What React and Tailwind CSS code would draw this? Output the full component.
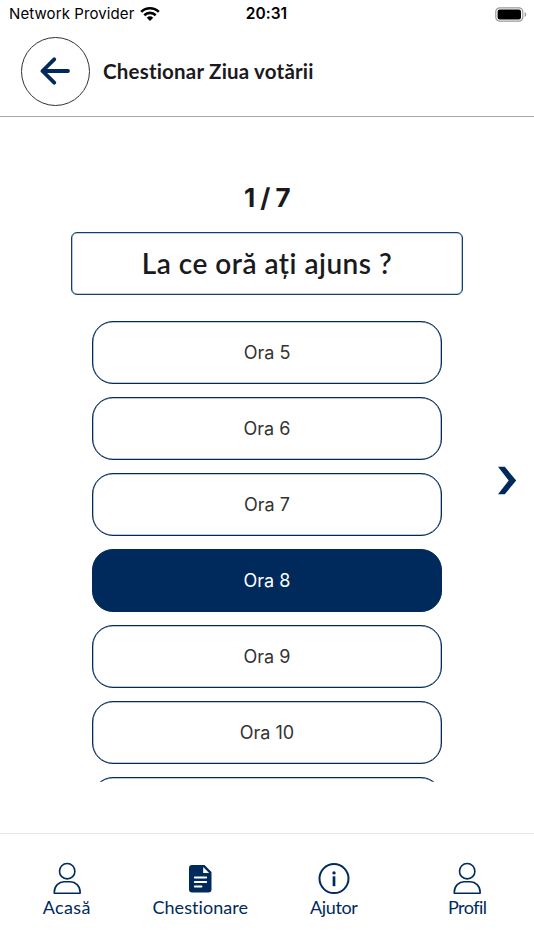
const options = ["Ora 5", "Ora 6", "Ora 7", "Ora 8", "Ora 9", "Ora 10", ""];
const selected = "Ora 8";

function WifiIcon() {
  return (
    <svg className="ml-[6px] h-[14px] w-[20px]" viewBox="0 0 20 14" fill="none" stroke="#000" strokeWidth="2.6">
      <path d="M1.200 4.900a12.600 12.600 0 0 1 17.600 0" />
      <path d="M4.300 8.200a8.200 8.200 0 0 1 11.400 0" />
      <path d="M6.800 10.700a4.700 4.700 0 0 1 6.400 0L10 13.900Z" fill="#000" stroke="none" />
    </svg>
  );
}

function BatteryIcon() {
  return (
    <svg className="h-[15px] w-[32px]" viewBox="0 0 32 15" fill="none">
      <rect x="0.8" y="0.8" width="27" height="13.4" rx="4" stroke="#999" strokeWidth="1.2" />
      <rect x="2.6" y="2.6" width="23.4" height="9.8" rx="2.2" fill="#000" />
      <path d="M29.600 5v5c2-.8 2-4.200 0-5Z" fill="#999" />
    </svg>
  );
}

function PersonIcon() {
  return (
    <svg className="h-[34px] w-[30px]" viewBox="0 0 30 34" fill="none" stroke="#002a5c" strokeWidth="1.6">
      <circle cx="15.200" cy="10.200" r="7.700" />
      <path d="M2.300 32.200v-1.200C2.300 25 7 20.800 12 20.800h6.400c5 0 9.700 4.200 9.700 10.200v1.200Z" strokeLinejoin="round" />
    </svg>
  );
}

function DocumentIcon() {
  return (
    <svg className="h-[34px] w-[30px]" viewBox="0 0 30 34">
      <path d="M7 4h12.500l7 7v17.500a3 3 0 0 1-3 3H7a3 3 0 0 1-3-3V7a3 3 0 0 1 3-3Z" fill="#002a5c" />
      <path d="M18.200 6v5.900h5.900Z" fill="#fff" />
      <path d="M9.800 16.500h11.400M9.800 21h11.400M9.800 25.500h6.700" stroke="#fff" strokeWidth="1.900" strokeLinecap="round" />
    </svg>
  );
}

function InfoIcon() {
  return (
    <svg className="h-[34px] w-[32px]" viewBox="0 0 32 34" fill="none">
      <circle cx="16" cy="17.600" r="14.500" stroke="#002a5c" strokeWidth="2" />
      <circle cx="16" cy="11.900" r="1.700" fill="#002a5c" />
      <path d="M16 15.300v9.900" stroke="#002a5c" strokeWidth="2.700" />
    </svg>
  );
}

const tabs = [
  { label: "Acasă", Icon: PersonIcon, spacing: "tracking-[0.4px]" },
  { label: "Chestionare", Icon: DocumentIcon, spacing: "tracking-[0.05px]" },
  { label: "Ajutor", Icon: InfoIcon, spacing: "tracking-[-0.4px]" },
  { label: "Profil", Icon: PersonIcon, spacing: "tracking-[-0.5px]" },
];

export default function App() {
  return (
    <div className="flex h-[950px] w-[534px] flex-col overflow-hidden bg-white font-['Inter',sans-serif] text-[#1a1a1e] [font-variant-ligatures:none]">
      <div className="grid h-[28px] shrink-0 grid-cols-3 items-center pl-[9px] pr-[7px] text-black">
        <div className="flex items-center whitespace-nowrap text-[15px] tracking-[0.1px]">
          <span>Network Provider</span>
          <WifiIcon />
        </div>
        <div className="pr-[3px] text-center text-[15.5px] font-semibold">20:31</div>
        <div className="flex justify-end"><BatteryIcon /></div>
      </div>

      <header className="flex h-[89px] shrink-0 items-center border-b border-[#a6a6a6] pb-[2px] pl-[21px]">
        <button className="flex size-[69px] items-center justify-center rounded-full border border-[#333]">
          <svg className="mr-[1px] h-[28px] w-[30px]" viewBox="0 0 30 28" fill="none" stroke="#002a5c" strokeWidth="3.8" strokeLinecap="round" strokeLinejoin="round">
            <path d="M28 14H2.500M14.200 2.300 2.500 14l11.700 11.700" />
          </svg>
        </button>
        <h1 className="ml-[13px] whitespace-nowrap font-['Lato',sans-serif] text-[20.5px] font-bold tracking-[0.2px]">Chestionar Ziua votării</h1>
      </header>

      <main className="flex h-[716px] shrink-0 flex-col items-center pt-[61px]">
        <div className="flex h-[40px] items-center text-[26px] font-bold leading-none tracking-[-0.5px]">1 / 7</div>
        <div className="mt-[14px] flex h-[63px] w-[392px] shrink-0 items-center justify-center rounded-[6px] border border-[#123f73] pb-[2px] font-['Lato',sans-serif] text-[28px] font-semibold tracking-[0.5px] shadow-[inset_0_0_0_0.3px_#123f73]">
          La ce oră ați ajuns ?
        </div>
        <div className="mt-[25.6px] grid h-[461.4px] w-full shrink-0 grid-cols-[92px_350px_1fr]">
          <div />
          <div className="flex flex-col gap-[13.1px] overflow-hidden">
            {options.map((option, index) => (
              <button
                key={index}
                className={
                  "h-[63px] w-full shrink-0 rounded-[21px] border border-[#002a5c] text-[18px] shadow-[inset_0_0_0_0.3px_#002a5c] " +
                  (option === selected ? "bg-[#002a5c] text-white" : "bg-white text-[#333]")
                }
              >
                {option}
              </button>
            ))}
          </div>
          <button className="flex items-start pl-[56px] pt-[145.4px]">
            <svg className="h-[29px] w-[19px]" viewBox="0 0 19 29">
              <path d="M0 .8h6.800L18.200 14.500 6.800 28.200H0L10.700 14.500Z" fill="#002a5c" />
            </svg>
          </button>
        </div>
      </main>

      <nav className="grid h-[117px] shrink-0 grid-cols-4 border-t border-[#e6e6e6] pt-[27px]">
        {tabs.map(({ label, Icon, spacing }) => (
          <div key={label} className="flex flex-col items-center">
            <Icon />
            <span className={"font-['Lato',sans-serif] text-[18px] leading-[24px] text-[#002a5c] " + spacing}>{label}</span>
          </div>
        ))}
      </nav>
    </div>
  );
}
